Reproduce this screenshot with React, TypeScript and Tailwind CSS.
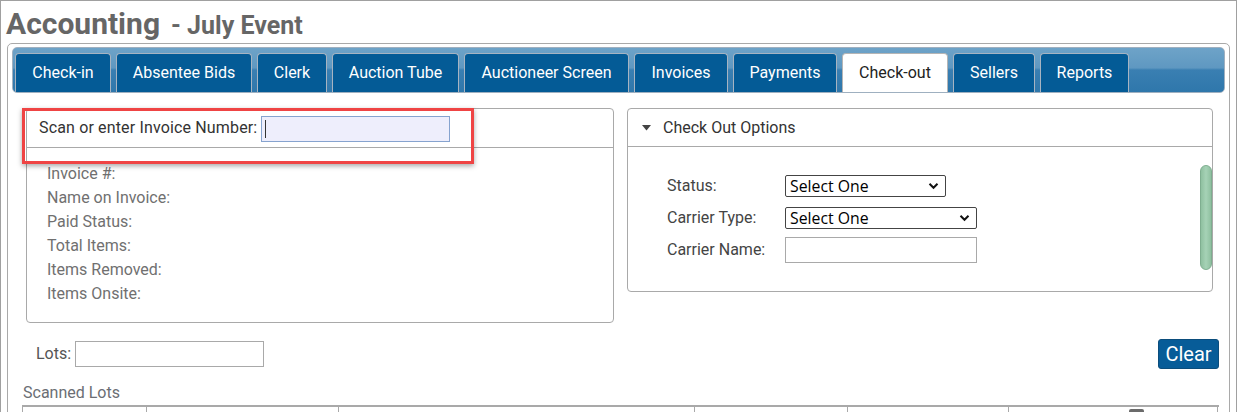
import React from "react";

const tabs: { label: string; w: string; active?: boolean }[] = [
  { label: "Check-in", w: "w-[96px]" },
  { label: "Absentee Bids", w: "w-[136px]" },
  { label: "Clerk", w: "w-[70px]" },
  { label: "Auction Tube", w: "w-[127px]" },
  { label: "Auctioneer Screen", w: "w-[165px]" },
  { label: "Invoices", w: "w-[94px]" },
  { label: "Payments", w: "w-[104px]" },
  { label: "Check-out", w: "w-[106px]", active: true },
  { label: "Sellers", w: "w-[82px]" },
  { label: "Reports", w: "w-[89px]" },
];

function Chevron() {
  return (
    <svg width="11" height="8" viewBox="0 0 11 8" className="absolute right-[6px] top-1/2 -translate-y-1/2 pointer-events-none">
      <path d="M1.5 1.8 L5.5 5.8 L9.5 1.8" fill="none" stroke="#111" strokeWidth="2" />
    </svg>
  );
}

function Select({ w }: { w: string }) {
  return (
    <div className={`relative ${w} h-[22px] border border-[#444] rounded-[2px] bg-white`}>
      <div className="pl-[4px] leading-[20px] text-[15.8px] text-black font-['Open_Sans',sans-serif]">Select One</div>
      <Chevron />
    </div>
  );
}

export default function App() {
  return (
    <div className="w-[1237px] h-[412px] overflow-hidden border-t border-l border-r border-[#a0a0a0] bg-white font-['Roboto',sans-serif]">
      {/* Title */}
      <div className="h-[42px] pl-[5px] flex items-baseline text-[#666666] font-bold leading-normal">
        <span className="text-[30px]">Accounting</span>
        <span className="text-[25px] ml-[11px]">- July Event</span>
      </div>

      {/* Frame */}
      <div className="ml-[6px] w-[1223px] h-[400px] rounded-[5px] border border-[#a9a9a9] px-[4px] pt-[3px]">
        {/* Tab bar */}
        <div className="h-[46px] rounded-[5px] border border-[#9fb0c0] pl-[2px] pt-[5px] flex gap-[5px] bg-[linear-gradient(to_bottom,#6ea3c8_0%,#5f98c1_45%,#3a7fb2_50%,#2f77ab_100%)] overflow-hidden">
          {tabs.map((t) => (
            <div
              key={t.label}
              className={
                t.active
                  ? `${t.w} h-[39px] shrink-0 rounded-t-[4px] border border-b-0 border-[#b5b5b5] bg-white text-[#222] text-[16px] flex items-center justify-center`
                  : `${t.w} h-[39px] shrink-0 rounded-t-[4px] border border-b-0 border-[#a7b4c2] bg-[#045b96] text-white text-[16px] flex items-center justify-center`
              }
            >
              {t.label}
            </div>
          ))}
        </div>

        {/* Content */}
        <div className="pl-[10px] pr-[6px] pt-[15px]">
          <div className="pl-[4px] pr-[5px] flex items-start gap-[13px]">
            {/* Left panel */}
            <div className="relative w-[588px] h-[215px] rounded-[4px] border border-[#a9a9a9]">
              <div className="h-[39px] border-b border-[#a9a9a9] pl-[12px] flex items-center text-[16px] text-[#333]">
                <span className="tracking-[0.15px]">Scan or enter Invoice Number:</span>
                <div className="ml-[4px] mt-[2px] w-[189px] h-[26px] border border-[#86a3cf] bg-[#eeeefc] flex items-center pl-[3px]">
                  <div className="w-px h-[18px] bg-[#333]" />
                </div>
              </div>
              <div className="pl-[20px] pt-[14px] text-[16px] leading-[24px] text-[#707070]">
                <div>Invoice #:</div>
                <div>Name on Invoice:</div>
                <div>Paid Status:</div>
                <div>Total Items:</div>
                <div>Items Removed:</div>
                <div>Items Onsite:</div>
              </div>
              {/* red annotation box */}
              <div className="absolute left-[-5px] top-[-1px] w-[452px] h-[56px] border-[3px] border-[#ef4444] shadow-[0_2px_5px_rgba(0,0,0,0.35)] pointer-events-none" />
            </div>

            {/* Right panel */}
            <div className="w-[586px] h-[184px] rounded-[4px] border border-[#a9a9a9]">
              <div className="h-[38px] border-b border-[#a9a9a9] flex items-center pl-[14px] text-[16px] text-[#333]">
                <svg width="9" height="6" viewBox="0 0 9 6" className="mr-[12px] mt-[1px]">
                  <path d="M0 0 H9 L4.5 5.5 Z" fill="#444" />
                </svg>
                <span>Check Out Options</span>
              </div>
              <div className="relative pl-[39px] pt-[23px] text-[16px] text-[#444]">
                <div className="h-[32px] flex items-center">
                  <span className="w-[118px]">Status:</span>
                  <Select w="w-[161px]" />
                </div>
                <div className="h-[32px] flex items-center">
                  <span className="w-[118px]">Carrier Type:</span>
                  <Select w="w-[192px]" />
                </div>
                <div className="h-[32px] flex items-center">
                  <span className="w-[118px]">Carrier Name:</span>
                  <div className="w-[192px] h-[26px] border border-[#a9a9a9] bg-white" />
                </div>
                {/* scrollbar thumb */}
                <div className="absolute right-0 top-[18px] w-[12px] h-[105px] rounded-full border border-[#7fae90] bg-[linear-gradient(to_right,#8fc0a0,#a6d2b6,#8fc0a0)]" />
              </div>
            </div>
          </div>

          {/* Lots row */}
          <div className="mt-[15px] h-[31px] flex items-center justify-between">
            <div className="pl-[14px] flex items-center text-[16px] text-[#555]">
              <span>Lots:</span>
              <div className="ml-[4px] w-[189px] h-[26px] border border-[#a9a9a9] bg-white" />
            </div>
            <div className="w-[61px] h-[30px] rounded-[3px] border border-[#0b4d7c] bg-[#075c98] text-white text-[20px] flex items-center justify-center">
              Clear
            </div>
          </div>

          {/* Scanned Lots */}
          <div className="mt-[12px] h-[24px] leading-[24px] pl-[1px] text-[16px] text-[#6b6e74]">Scanned Lots</div>
          <div className="relative h-[20px] border-t-2 border-[#a9a9a9] grid grid-cols-[124px_192px_356px_153px_161px_210px]">
            <div className="border-l border-[#a9a9a9]" />
            <div className="border-l border-[#a9a9a9]" />
            <div className="border-l border-[#a9a9a9]" />
            <div className="border-l border-[#a9a9a9]" />
            <div className="border-l border-[#a9a9a9]" />
            <div className="border-l border-r border-[#a9a9a9] relative">
              <div className="absolute left-[120px] top-[2px] w-[15px] h-[6px] rounded-[2px] bg-[#6b6b6b]" />
            </div>
          </div>
        </div>
      </div>
    </div>
  );
}
